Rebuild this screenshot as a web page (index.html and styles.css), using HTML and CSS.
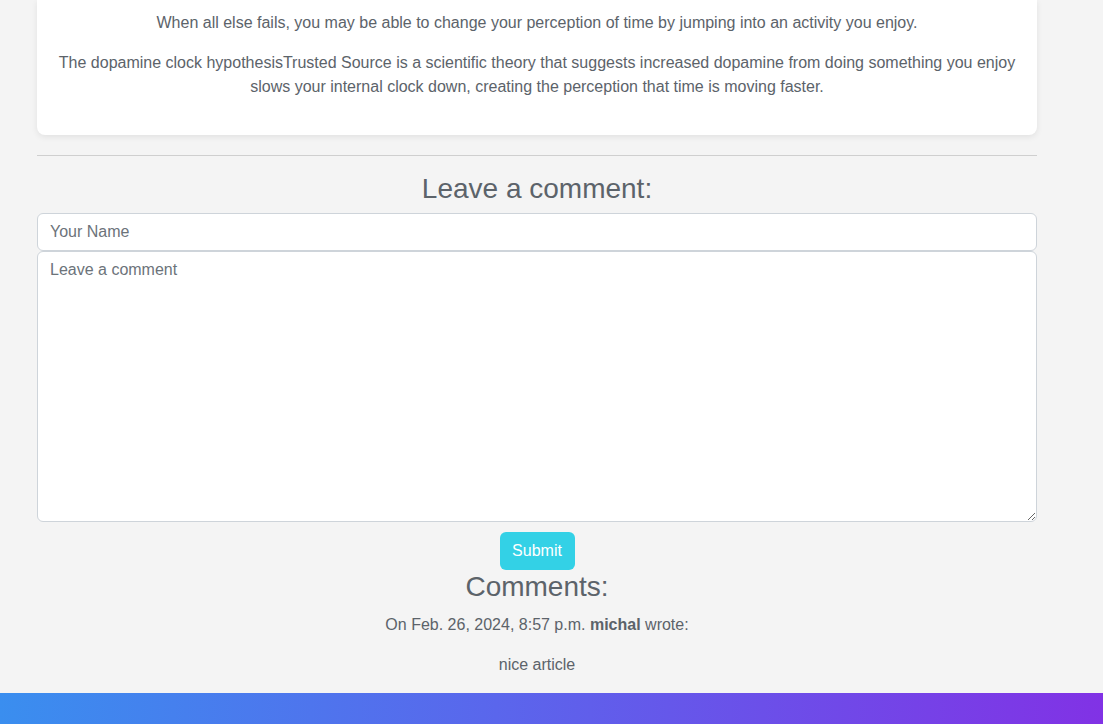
FILE: index.html
```html
<!DOCTYPE html>
<html>
<head>
<meta charset="utf-8">
<link rel="stylesheet" href="styles.css">
</head>
<body>
<div class="page">
  <main class="container">
    <article class="card">
      <p>When all else fails, you may be able to change your perception of time by jumping into an activity you enjoy.</p>
      <p>The dopamine clock hypothesisTrusted Source is a scientific theory that suggests increased dopamine from doing something you enjoy slows your internal clock down, creating the perception that time is moving faster.</p>
    </article>
    <hr class="divider">
    <h3 class="heading">Leave a comment:</h3>
    <form class="form">
      <input class="field" type="text" placeholder="Your Name">
      <textarea class="field area" placeholder="Leave a comment"></textarea>
      <button class="btn" type="button">Submit</button>
    </form>
    <h3 class="heading comments-title">Comments:</h3>
    <p class="meta">On Feb. 26, 2024, 8:57 p.m. <strong>michal</strong> wrote:</p>
    <p class="comment">nice article</p>
  </main>
  <footer class="footer"></footer>
</div>
</body>
</html>
```

FILE: styles.css
```css
* { box-sizing: border-box; }
html, body { margin: 0; padding: 0; }
body {
  background: #f4f4f4;
  font-family: "Liberation Sans", Arial, sans-serif;
  font-size: 16px;
  line-height: 24px;
  color: #5c636a;
  overflow: hidden;
}
.page { display: flex; flex-direction: column; min-height: 724px; }
.container {
  width: 1000px;
  margin-left: 37px;
  display: flex;
  flex-direction: column;
}
.card {
  background: #fff;
  border-radius: 0 0 8px 8px;
  box-shadow: 0 2px 6px rgba(0,0,0,0.08);
  padding: 11px 20px 20px;
  text-align: center;
}
.card p { margin: 0 0 16px; }
.divider {
  margin: 20px 0 0;
  border: 0;
  border-top: 1px solid #cfcfcf;
  height: 0;
}
.heading {
  margin: 16px 0 8px;
  text-align: center;
  font-weight: 400;
  font-size: 28px;
  line-height: 33px;
  color: #5c636a;
}
.form { display: flex; flex-direction: column; align-items: center; }
.field {
  width: 100%;
  height: 38px;
  border: 1px solid #ced4da;
  border-radius: 6px;
  padding: 6px 12px;
  font-family: inherit;
  font-size: 16px;
  line-height: 24px;
  color: #5c636a;
  background: #fff;
  outline: none;
}
.field::placeholder { color: #6c737a; }
.area { height: 271px; margin-top: 0; resize: vertical; display: block; }
.btn {
  margin-top: 10px;
  width: 75px;
  height: 38px;
  background: #33d1e6;
  color: #fff;
  border: 0;
  border-radius: 6px;
  font-family: inherit;
  font-size: 16px;
}
.comments-title { margin: 0 0 10px; }
.meta, .comment { margin: 0 0 16px; text-align: center; }
.meta strong { font-weight: 700; }
.footer {
  margin-top: auto;
  height: 32px;
  background: linear-gradient(to right, #3a8eef, #5a66ec 45%, #8132e5);
}
```
